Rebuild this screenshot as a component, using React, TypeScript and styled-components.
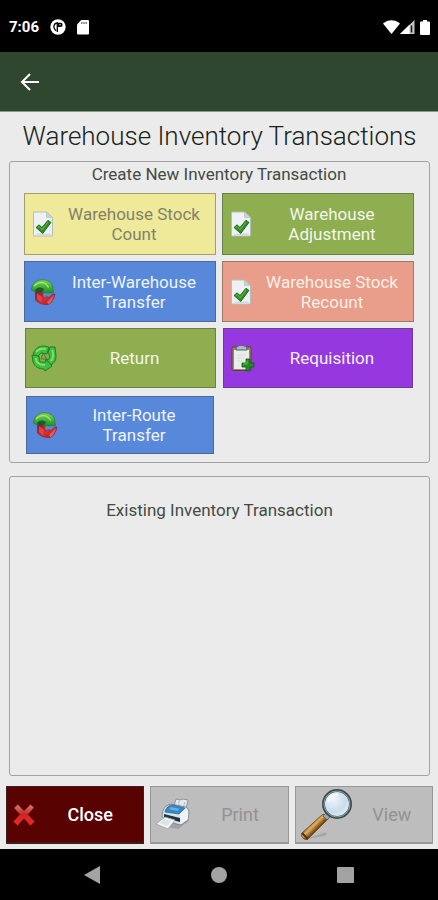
import React from "react";
import styled, { createGlobalStyle } from "styled-components";

const GlobalStyle = createGlobalStyle`
  *, *::before, *::after { box-sizing: border-box; }
  body { margin: 0; background: #ebebeb; font-family: Roboto, "Liberation Sans", sans-serif; }
  button { font-family: inherit; cursor: pointer; }
  button:disabled { cursor: default; }
  svg { display: block; flex: none; }
`;

const Screen = styled.div`
  display: flex;
  flex-direction: column;
  min-height: 100vh;
`;

const StatusBar = styled.div`
  display: flex;
  align-items: center;
  justify-content: space-between;
  height: 52px;
  padding: 2px 8px 0 9px;
  background: #000;
  color: #fff;
`;

const StatusGroup = styled.div<{ $gap: number }>`
  display: flex;
  align-items: center;
  gap: ${(p) => p.$gap}px;
`;

const Clock = styled.time`
  font-size: 15px;
  line-height: 20px;
  font-weight: 700;
`;

const AppBar = styled.header`
  display: flex;
  align-items: center;
  height: 60px;
  padding: 0 14px;
  background: #2f472e;
  border-bottom: 1px solid #8c9a8b;
`;

const BackButton = styled.button`
  display: grid;
  place-items: center;
  width: 32px;
  height: 32px;
  padding: 0;
  border: 0;
  background: none;
  color: #fff;
`;

const Main = styled.main`
  display: flex;
  flex: 1;
  flex-direction: column;
  padding: 8px 5px 5px 6px;
`;

const Title = styled.h1`
  margin: 0 0 9px;
  color: #172317;
  font-size: 26px;
  line-height: 32px;
  font-weight: 300;
  text-align: center;
`;

const Panel = styled.section<{ $grow?: boolean }>`
  flex: ${(p) => (p.$grow ? "1" : "none")};
  margin: 0 3px;
  padding: ${(p) => (p.$grow ? "23px 14px" : "2px 15px 6px 14px")};
  border: 1px solid #a2a2a2;
  border-radius: 3px;
  & + & { margin-top: 13px; }
`;

const PanelTitle = styled.h2`
  margin: 0 0 9px;
  color: #434b43;
  font-size: 17px;
  line-height: 20px;
  font-weight: 400;
  text-align: center;
`;

const ActionGrid = styled.div`
  display: grid;
  grid-template-columns: 1fr 1fr;
  grid-template-rows: 62px 61px 60px 62px;
  gap: 6px;
`;

const ActionButton = styled.button<{ $bg: string; $fg: string; $margin?: string }>`
  display: flex;
  align-items: center;
  margin: ${(p) => p.$margin ?? "0"};
  padding: 0 4px;
  border: 1px solid rgba(60, 70, 60, 0.45);
  background: ${(p) => p.$bg};
  color: ${(p) => p.$fg};
  font-size: 17px;
  line-height: 20px;
`;

const ActionLabel = styled.span`
  flex: 1;
  padding: 0 8px;
`;

const Footer = styled.footer`
  display: grid;
  grid-template-columns: repeat(3, 1fr);
  gap: 6px;
  margin-top: 10px;
`;

const FooterButton = styled.button<{ $danger?: boolean }>`
  display: flex;
  align-items: center;
  height: 58px;
  padding: 0 0 0 4px;
  border: 1px solid ${(p) => (p.$danger ? "#3c2020" : "#989898")};
  border-bottom-width: 2px;
  background: ${(p) => (p.$danger ? "#580202" : "#bdbdbd")};
  color: ${(p) => (p.$danger ? "#ffffff" : "#929292")};
  font-size: 18px;
  line-height: 20px;
  font-weight: ${(p) => (p.$danger ? 500 : 400)};
`;

const FooterLabel = styled.span`
  flex: 1;
`;

const NavBar = styled.nav`
  display: grid;
  grid-template-columns: repeat(3, 1fr);
  align-items: center;
  height: 51px;
  padding: 0 29px;
  background: #000;
`;

const NavButton = styled.button`
  display: grid;
  place-items: center;
  padding: 8px 0;
  border: 0;
  background: none;
`;

const AppStatusIcon = () => (
  <svg width="16" height="16" viewBox="0 0 16 16" aria-hidden="true">
    <circle cx="8" cy="8" r="7.700" fill="#fff" />
    <path d="M7.300 13V3.800C5 4.200 3.800 6 3.900 8c.1 1.700 1 2.900 2.200 3.600" fill="none" stroke="#000" strokeWidth="1.300" />
    <path d="M8 3.800h2.500a2 2 0 0 1 0 4.200H8z" fill="#000" />
    <circle cx="10" cy="5.800" r=".7" fill="#fff" />
  </svg>
);

const SdCardIcon = () => (
  <svg width="12" height="15" viewBox="0 0 12 15" aria-hidden="true">
    <path d="M4.300 0H11a1 1 0 0 1 1 1v12.500a1 1 0 0 1-1 1H1a1 1 0 0 1-1-1V4.500z" fill="#fff" />
    <path d="M4.800 2v2M7 2v2M9.200 2v2" stroke="#555" strokeWidth="1.100" />
  </svg>
);

const WifiIcon = () => (
  <svg width="17" height="14" viewBox="0 0 17 14" aria-hidden="true">
    <path d="M0 3.500C4.800-1 12.200-1 17 3.500L8.500 14z" fill="#fff" />
  </svg>
);

const SignalIcon = () => (
  <svg width="15" height="14" viewBox="0 0 15 14" aria-hidden="true">
    <path d="M0 14 14.500 0v14z" fill="#c4c4c4" />
    <path d="M0 14 9.500 4.800V14z" fill="#fff" />
    <path d="M11.500 5.500v7" stroke="#111" strokeWidth="1.500" />
  </svg>
);

const BatteryIcon = () => (
  <svg width="15" height="15" viewBox="-5 0 15 15" aria-hidden="true">
    <path d="M3 0h4v1.500h2a1 1 0 0 1 1 1V14a1 1 0 0 1-1 1H1a1 1 0 0 1-1-1V2.500a1 1 0 0 1 1-1h2z" fill="#fff" />
  </svg>
);

const BackIcon = () => (
  <svg width="20" height="18" viewBox="0 0 20 18" fill="none" stroke="currentColor" strokeWidth="2" aria-hidden="true">
    <path d="M19 9H2.500M10 1 2 9l8 8" />
  </svg>
);

const DocumentCheckIcon = () => (
  <svg width="28" height="30" viewBox="0 0 28 30" aria-hidden="true">
    <path d="M4.500 3h13l6 5.500V27h-19z" fill="#edf1f4" stroke="#b5bdb9" strokeWidth="1" />
    <path d="M17.500 3v5.500h6z" fill="#c9d2d2" stroke="#b5bdb9" strokeWidth=".6" />
    <path d="M7.500 25.500h14" stroke="#d3dae0" strokeWidth="2" />
    <path d="M7 18.500l3-2.700 3 2.700 6-7.300 3 2.200-8.300 11.200z" fill="#2f8a22" stroke="#175e18" strokeWidth=".8" strokeLinejoin="round" />
    <path d="M9 18.500l1-.8 3.200 3 6-7.600" fill="none" stroke="#58b23d" strokeWidth="1.100" />
  </svg>
);

const TransferIcon = () => (
  <svg width="28" height="30" viewBox="0 0 28 30" aria-hidden="true">
    <defs>
      <linearGradient id="transferGreen" x1="0" y1="0" x2="0" y2="1">
        <stop offset="0" stopColor="#7ed64f" />
        <stop offset="1" stopColor="#179128" />
      </linearGradient>
      <linearGradient id="transferRed" x1="0" y1="0" x2="1" y2="1">
        <stop offset="0" stopColor="#8d1119" />
        <stop offset=".55" stopColor="#d62f34" />
        <stop offset="1" stopColor="#a3141c" />
      </linearGradient>
    </defs>
    <path d="M6.500 13v10c3 3.500 8 5 13 4.500 3.500-2 5.500-6 6.500-10.500l-3 .5-3 3-4-1.500-1-5z" fill="url(#transferRed)" stroke="#811b2c" strokeWidth=".6" />
    <path d="M18 25l7-7c-.5 4-2.500 7-5.500 9.500z" fill="#e25d5b" />
    <path d="M8 16l5 4-1 5-4-3z" fill="#e45a5d" opacity=".65" />
    <path d="M2.500 13C3 6 8 2.500 14 2.800c5 .2 8.500 2.700 9.500 6.200l1 6.800-12 .2 2.500-3.500c-2.500-1.500-6-1.500-8.500 2.500z" fill="url(#transferGreen)" stroke="#267831" strokeWidth=".7" strokeLinejoin="round" />
    <path d="M5 9c5-5.500 12-4 14.500 1.500" fill="none" stroke="#a6eb70" strokeWidth="1.200" />
    <path d="M6 13c2-3 5.500-3.500 9-1l-2.500 3.500H7z" fill="#235631" />
    <circle cx="16" cy="18" r="2" fill="#5d88cb" />
  </svg>
);

const RecycleIcon = () => (
  <svg width="28" height="30" viewBox="0 0 28 30" aria-hidden="true">
    <g fill="#40bd3e" stroke="#267d2a" strokeWidth="1" strokeLinejoin="round">
      <path d="M4 9c2-4 5-6 10-6 2 0 4 1 5 1l-2 7-6-1-4 4-4-1z" />
      <path d="M20 4h5l1 9c0 5-2 7-5 9l-6-5 4-1c1-2 1-4-1-6z" />
      <path d="M2 12l7 1 1 6h6v-3l6 7-7 5-1-2c-5 0-9-2-11-7z" />
    </g>
    <path d="M6 9c3-3 5-4 10-3M22 7c2 4 1 8-1 11M6 15c0 5 3 7 9 7" fill="none" stroke="#79e568" strokeWidth="2" />
    <path d="M13 10l4 6h-6z" fill="#83a854" stroke="#347d2f" strokeWidth=".8" />
  </svg>
);

const ClipboardAddIcon = () => (
  <svg width="28" height="30" viewBox="0 0 28 30" aria-hidden="true">
    <rect x="4" y="4" width="19" height="23.500" rx="1.500" fill="#a58557" stroke="#564232" strokeWidth="1" />
    <path d="M6 7h15v17l-3 2H6z" fill="#e9edec" />
    <path d="M8 6c0-2 2-3.500 5.500-3.500S19 4 19 6v1H8z" fill="#aebbc5" stroke="#59636f" strokeWidth="1" />
    <path d="M9 12h9M9 15h8M9 18h6" stroke="#d8dddd" strokeWidth="1" />
    <path d="M18 16h4v4h4v4h-4v4h-4v-4h-4v-4h4z" fill="#238b24" stroke="#0e5515" strokeWidth=".8" />
    <path d="M19 17.500v3.500h-4" fill="none" stroke="#65c44e" strokeWidth="1" />
  </svg>
);

const CloseIcon = () => (
  <svg width="26" height="26" viewBox="0 0 26 26" aria-hidden="true">
    <defs>
      <linearGradient id="closeRed" x1="0" y1="0" x2="0" y2="1">
        <stop offset="0" stopColor="#d1827c" />
        <stop offset=".45" stopColor="#c92724" />
        <stop offset="1" stopColor="#ed2b27" />
      </linearGradient>
    </defs>
    <path d="M3 6l4-3.500 6 6.500 6.500-6.500L23 5.500 17 12.500l6.500 7-4 4-6.500-7-6.500 7-4-4L9 12.500z" fill="url(#closeRed)" stroke="#93211f" strokeWidth=".6" />
  </svg>
);

const PrinterIcon = () => (
  <svg width="37" height="36" viewBox="1 0 37 36" aria-hidden="true">
    <path d="M7 29l17 3 11-8-2-6z" fill="#888" opacity=".5" />
    <path d="M20 9l2-7 4 1 3-1 5 1-2 9z" fill="#e4e9ed" stroke="#89949e" />
    <path d="M25 4v6M31 5l-2 6" fill="none" stroke="#aeb9c2" />
    <path d="M9 14c1-4 4-6 8-7l15 3c2 1 3 3 3 6l-1 7-7 5-16-4-3-5z" fill="#d9e3ea" stroke="#6d7e8b" strokeWidth=".8" />
    <path d="M12 12c2-3 4-4 7-4l12 3-6 6-14-2z" fill="#3689c4" stroke="#24638d" strokeWidth=".7" />
    <path d="M17 10l9 2-3 2-8-2z" fill="#69b0dd" />
    <path d="M26 17l6-5c2 1 2 3 2 5v5l-7 5z" fill="#f0f4f6" />
    <path d="M10 17l16 4v4l-16-4z" fill="#22333f" />
    <path d="M11 20l10 3-7 9-12-5z" fill="#f2f5f6" stroke="#98a1a7" strokeWidth=".8" />
    <path d="M11 22l6 2-4 5-8-3z" fill="#dce3e8" />
  </svg>
);

const MagnifierIcon = () => (
  <svg width="52" height="54" viewBox="0 0 52 54" aria-hidden="true">
    <defs>
      <radialGradient id="lens" cx=".35" cy=".3" r=".8">
        <stop offset="0" stopColor="#f2f7fb" />
        <stop offset=".6" stopColor="#c9dceb" />
        <stop offset="1" stopColor="#e6f0f5" />
      </radialGradient>
      <linearGradient id="handle" gradientUnits="userSpaceOnUse" x1="11" y1="35" x2="17" y2="41">
        <stop offset="0" stopColor="#8a581c" />
        <stop offset=".4" stopColor="#e3b260" />
        <stop offset="1" stopColor="#744512" />
      </linearGradient>
    </defs>
    <path d="M6 51l17-6c5-1 5 1 1 3z" fill="#777" opacity=".35" />
    <path d="M23 26l5 5L8 51c-3 2-8-2-6-6z" fill="url(#handle)" stroke="#684316" strokeWidth=".8" />
    <path d="M2 45l6 6" stroke="#513315" strokeWidth="2" />
    <path d="M23 28l4 4 4-4-4-4z" fill="#9aa6aa" stroke="#4b5558" strokeWidth=".8" />
    <circle cx="37" cy="16" r="13.500" fill="url(#lens)" stroke="#3c4a50" strokeWidth="3" />
    <circle cx="37" cy="16" r="13" fill="none" stroke="#8fa4ae" strokeWidth="1" />
    <path d="M28 14c1-5 5-8 10-7" fill="none" stroke="#fff" strokeWidth="2" opacity=".7" />
  </svg>
);

const actions = [
  { label: "Warehouse Stock Count", bg: "#eeea9a", fg: "#858169", Icon: DocumentCheckIcon },
  { label: "Warehouse Adjustment", bg: "#8eae50", fg: "#f4f7ed", Icon: DocumentCheckIcon },
  { label: "Inter-Warehouse Transfer", bg: "#5888da", fg: "#edf3ff", Icon: TransferIcon },
  { label: "Warehouse Stock Recount", bg: "#e89e8a", fg: "#faefe8", Icon: DocumentCheckIcon },
  { label: "Return", bg: "#8eae50", fg: "#f4f7ed", Icon: RecycleIcon, margin: "0 0 0 1px" },
  { label: "Requisition", bg: "#9638df", fg: "#f8efff", Icon: ClipboardAddIcon, margin: "0 1px" },
  { label: "Inter-Route Transfer", bg: "#5888da", fg: "#edf3ff", Icon: TransferIcon, margin: "2px" },
];

export default function App() {
  return (
    <>
      <GlobalStyle />
      <Screen>
        <StatusBar>
          <StatusGroup $gap={11}>
            <Clock>7:06</Clock>
            <AppStatusIcon />
            <SdCardIcon />
          </StatusGroup>
          <StatusGroup $gap={0}>
            <WifiIcon />
            <SignalIcon />
            <BatteryIcon />
          </StatusGroup>
        </StatusBar>
        <AppBar>
          <BackButton type="button" aria-label="Back"><BackIcon /></BackButton>
        </AppBar>
        <Main>
          <Title>Warehouse Inventory Transactions</Title>
          <Panel>
            <PanelTitle>Create New Inventory Transaction</PanelTitle>
            <ActionGrid>
              {actions.map(({ label, bg, fg, Icon, margin }) => (
                <ActionButton key={label} type="button" $bg={bg} $fg={fg} $margin={margin}>
                  <Icon />
                  <ActionLabel>{label}</ActionLabel>
                </ActionButton>
              ))}
            </ActionGrid>
          </Panel>
          <Panel $grow>
            <PanelTitle>Existing Inventory Transaction</PanelTitle>
          </Panel>
          <Footer>
            <FooterButton type="button" $danger>
              <CloseIcon />
              <FooterLabel>Close</FooterLabel>
            </FooterButton>
            <FooterButton type="button" disabled>
              <PrinterIcon />
              <FooterLabel>Print</FooterLabel>
            </FooterButton>
            <FooterButton type="button" disabled>
              <MagnifierIcon />
              <FooterLabel>View</FooterLabel>
            </FooterButton>
          </Footer>
        </Main>
        <NavBar aria-label="System navigation">
          <NavButton type="button" aria-label="Back">
            <svg width="17" height="18" viewBox="0 0 17 18"><path d="M16 0v18L0 9z" fill="#a3a3a3" /></svg>
          </NavButton>
          <NavButton type="button" aria-label="Home">
            <svg width="16" height="16" viewBox="0 0 16 16"><circle cx="8" cy="8" r="8" fill="#a3a3a3" /></svg>
          </NavButton>
          <NavButton type="button" aria-label="Recent apps">
            <svg width="17" height="16" viewBox="0 0 17 16"><rect width="17" height="16" rx="1" fill="#a3a3a3" /></svg>
          </NavButton>
        </NavBar>
      </Screen>
    </>
  );
}
